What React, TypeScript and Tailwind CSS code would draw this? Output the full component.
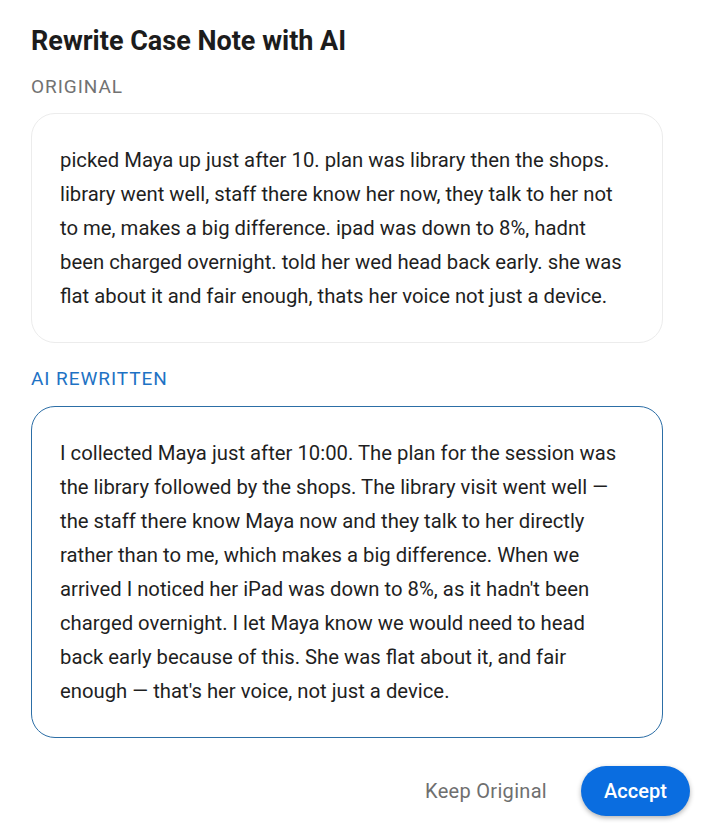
import React from 'react';

const original =
  'picked Maya up just after 10. plan was library then the shops. library went well, staff there know her now, they talk to her not to me, makes a big difference. ipad was down to 8%, hadnt been charged overnight. told her wed head back early. she was flat about it and fair enough, thats her voice not just a device.';

const rewritten =
  "I collected Maya just after 10:00. The plan for the session was the library followed by the shops. The library visit went well \u2014 the staff there know Maya now and they talk to her directly rather than to me, which makes a big difference. When we arrived I noticed her iPad was down to 8%, as it hadn't been charged overnight. I let Maya know we would need to head back early because of this. She was flat about it, and fair enough \u2014 that's her voice, not just a device.";

const App = () => {
  return (
    <div className="min-h-[840px] bg-white font-['Roboto',sans-serif] text-[#1f1f1f]">
      <div className="pl-[31px] pr-[31px] pt-[23px]">
        <h1 className="text-[27px] font-bold leading-[36px] text-[#1c1c1c]">Rewrite Case Note with AI</h1>

        <div className="mt-[16px] text-[19px] leading-[24px] tracking-[0.05em] text-[#727272]">ORIGINAL</div>
        <div className="mt-[14px] w-[632px] rounded-[24px] border border-[#ececec] py-[29px] pl-[28px] pr-[32px] text-[20.3px] leading-[34px]">
          {original}
        </div>

        <div className="mt-[24px] text-[19px] leading-[24px] tracking-[0.05em] text-[#1e72c4]">AI REWRITTEN</div>
        <div className="mt-[15px] w-[632px] rounded-[24px] border border-[#2c6ea6] py-[29px] pl-[28px] pr-[32px] text-[20.3px] leading-[34px]">
          {rewritten}
        </div>

        <div className="mt-[26px] flex items-center justify-end gap-[18px] pb-6">
          <button className="px-4 py-3 text-[20px] tracking-[0.015em] text-[#6f6f6f]">Keep Original</button>
          <button className="h-[50px] w-[109px] rounded-full bg-[#0a6de0] text-[20px] font-medium text-white shadow-[0_2px_5px_rgba(0,0,0,0.3)]">
            Accept
          </button>
        </div>
      </div>
    </div>
  );
};

export default App;
